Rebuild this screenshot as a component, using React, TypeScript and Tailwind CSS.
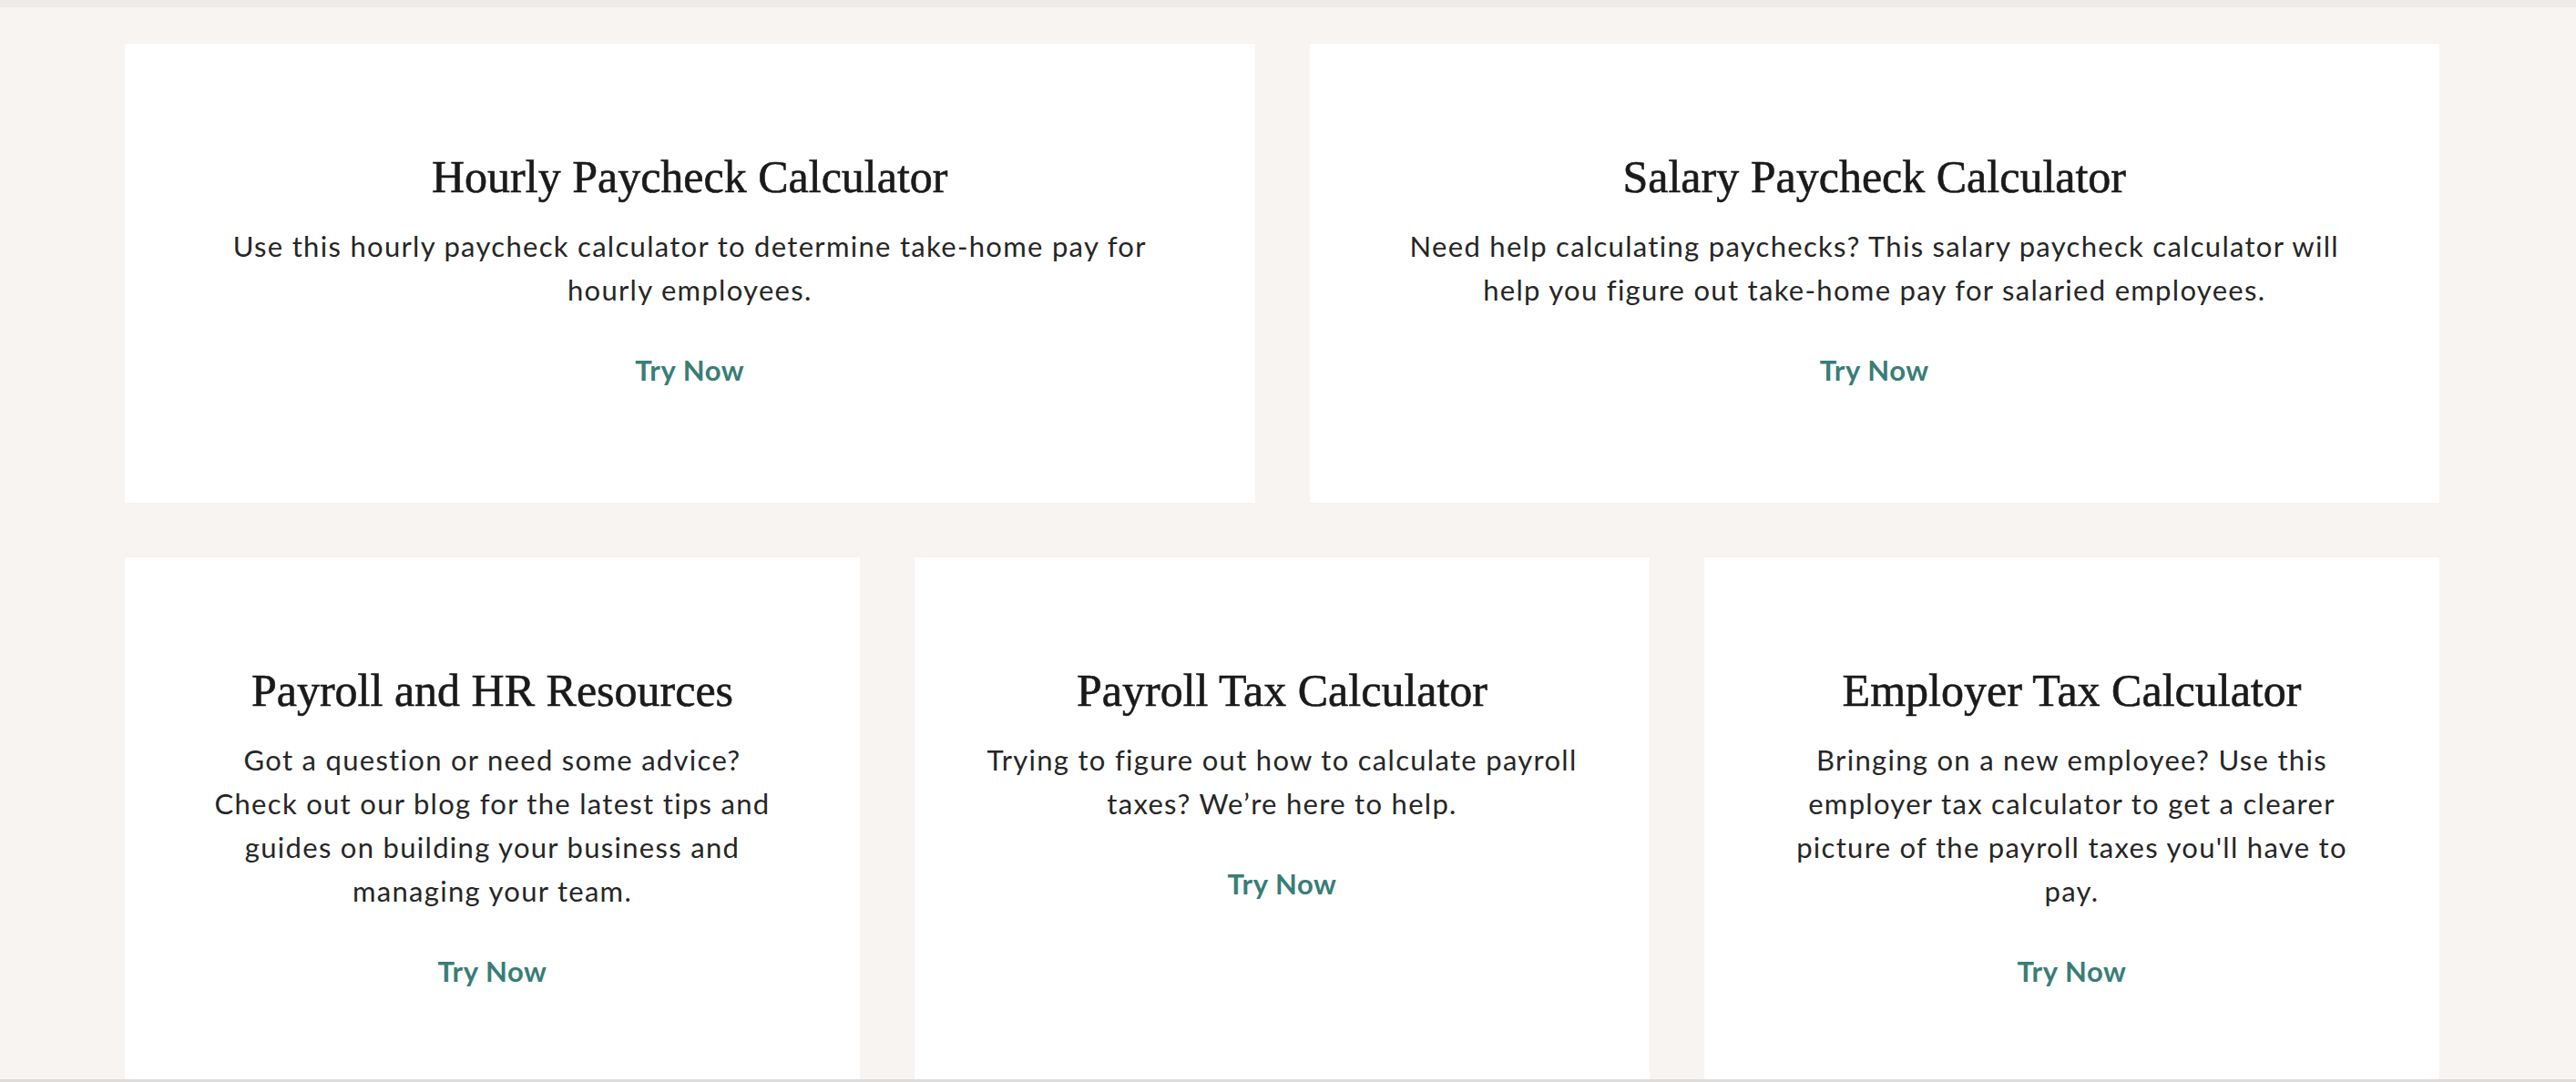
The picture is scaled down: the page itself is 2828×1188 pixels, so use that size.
import React from "react";

type Card = { title: string; lines: string[] };

const top: Card[] = [
  {
    title: "Hourly Paycheck Calculator",
    lines: ["Use this hourly paycheck calculator to determine take-home pay for", "hourly employees."],
  },
  {
    title: "Salary Paycheck Calculator",
    lines: [
      "Need help calculating paychecks? This salary paycheck calculator will",
      "help you figure out take-home pay for salaried employees.",
    ],
  },
];

const bottom: Card[] = [
  {
    title: "Payroll and HR Resources",
    lines: [
      "Got a question or need some advice?",
      "Check out our blog for the latest tips and",
      "guides on building your business and",
      "managing your team.",
    ],
  },
  {
    title: "Payroll Tax Calculator",
    lines: ["Trying to figure out how to calculate payroll", "taxes? We’re here to help."],
  },
  {
    title: "Employer Tax Calculator",
    lines: [
      "Bringing on a new employee? Use this",
      "employer tax calculator to get a clearer",
      "picture of the payroll taxes you'll have to",
      "pay.",
    ],
  },
];

function CardView({ c }: { c: Card }) {
  return (
    <div className="bg-white flex flex-col items-center text-center px-20 pt-[116px] pb-[122px]">
      <h2 className="font-['Liberation_Serif',serif] text-[50px] leading-[60px] text-[#1a1a1a] font-normal [-webkit-text-stroke:0.6px_#1a1a1a]">
        {c.title}
      </h2>
      <p className="mt-[22px] whitespace-nowrap font-['Lato',sans-serif] text-[31px] leading-[48px] tracking-[1.3px] text-[#262626]">
        {c.lines.map((l, i) => (
          <React.Fragment key={i}>
            {l}
            {i < c.lines.length - 1 && <br />}
          </React.Fragment>
        ))}
      </p>
      <a className="mt-[40px] font-['Lato',sans-serif] text-[31px] leading-[48px] font-bold tracking-[0.6px] text-[#3a7d77]">
        Try Now
      </a>
    </div>
  );
}

export default function App() {
  return (
    <div className="relative h-[1188px] overflow-hidden bg-[#f7f4f1]">
      <div className="h-[8px] bg-[#efebe8]" />
      <div className="ml-[137px] w-[2541px] pt-[40px] flex flex-col gap-[60px]">
        <div className="grid grid-cols-2 gap-[60px]">
          {top.map((c) => (
            <CardView key={c.title} c={c} />
          ))}
        </div>
        <div className="grid grid-cols-3 gap-[60px]">
          {bottom.map((c) => (
            <CardView key={c.title} c={c} />
          ))}
        </div>
      </div>
      <div className="absolute bottom-0 left-0 right-0 h-[3px] bg-[#dcdcdc]" />
    </div>
  );
}
